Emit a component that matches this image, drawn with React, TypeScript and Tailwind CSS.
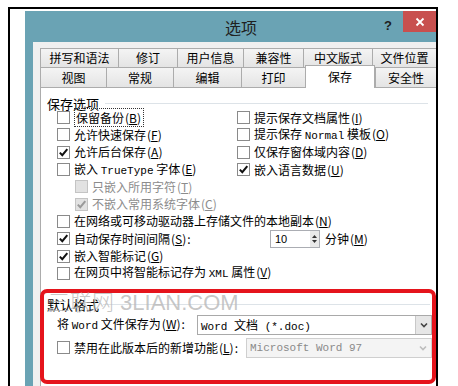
import type { ReactNode } from 'react';

const mono = "font-['Liberation_Mono',monospace] text-[11px]";

const Key = ({ k }: { k: string }) => (
  <span className="px-[1px]">
    (<span className="underline">{k}</span>)
  </span>
);

const Box = ({ checked = false, disabled = false }: { checked?: boolean; disabled?: boolean }) => (
  <span
    className={`flex h-[13px] w-[13px] shrink-0 items-center justify-center border ${
      disabled ? 'border-[#c4c4c4] bg-[#e2e2e2]' : 'border-[#8a8a8a] bg-white'
    }`}
  >
    {checked && (
      <svg width="11" height="11" viewBox="0 0 11 11">
        <path
          d="M1.8 5.6 L4.3 8.2 L9.3 2.2"
          fill="none"
          stroke={disabled ? '#9a9a9a' : '#111'}
          strokeWidth="2"
        />
      </svg>
    )}
  </span>
);

const Row = ({
  checked,
  disabled,
  children,
  indent = false,
}: {
  checked?: boolean;
  disabled?: boolean;
  children: ReactNode;
  indent?: boolean;
}) => (
  <div className={`flex h-[17.3px] items-center gap-[4px] ${indent ? 'ml-[18px]' : ''}`}>
    <Box checked={checked} disabled={disabled} />
    <span className={`whitespace-nowrap leading-none ${disabled ? 'text-[#8c8c8c]' : 'text-black'}`}>{children}</span>
  </div>
);

const Chevron = ({ color }: { color: string }) => (
  <svg width="8" height="6" viewBox="0 0 8 6">
    <path d="M1 1.5 L4 4.5 L7 1.5" fill="none" stroke={color} strokeWidth="1.6" />
  </svg>
);

const backTabs = [
  { label: '拼写和语法', w: 'w-[78px]' },
  { label: '修订', w: 'w-[59px]' },
  { label: '用户信息', w: 'w-[66px]' },
  { label: '兼容性', w: 'w-[60px]' },
  { label: '中文版式', w: 'w-[69px]' },
  { label: '文件位置', w: 'w-[64px]' },
];

const frontTabs = [
  { label: '视图', w: 'w-[66px]' },
  { label: '常规', w: 'w-[67px]' },
  { label: '编辑', w: 'w-[68px]' },
  { label: '打印', w: 'w-[64px]' },
  { label: '保存', w: 'w-[70px]', active: true },
  { label: '安全性', w: 'w-[61px]' },
];

const App = () => {
  return (
    <div className="h-[386px] w-[458px] overflow-hidden bg-white pl-[8px] pt-[7px] font-['Noto_Sans_CJK_SC',sans-serif] text-[12px] text-black">
      <div className="h-[379px] w-[430px] border-l-2 border-r-2 border-t-2 border-black pl-[15px] pt-[2px]">
        <div className="flex h-[375px] flex-col bg-[#6aa3b4]">
          {/* title bar */}
          <div className="flex h-[31px] shrink-0 items-start">
            <span className="ml-[200px] mt-[6px] text-[16px] leading-[20px] text-[#202020]">选项</span>
            <div className="flex-1" />
            <span className="mr-[11px] mt-[5px] font-['Liberation_Sans',sans-serif] text-[13px] font-bold text-[#1e1e1e]">?</span>
            <button className="flex h-[21px] w-[33px] items-center justify-center bg-[#c8504f]">
              <svg width="10" height="10" viewBox="0 0 10 10">
                <path d="M1.5 1.5 L8.5 8.5 M8.5 1.5 L1.5 8.5" stroke="#fff" strokeWidth="1.8" />
              </svg>
            </button>
          </div>

          <div className="flex flex-1">
            <div className="w-[8px] shrink-0" />
            <div className="flex flex-1 flex-col bg-[#f0f0f0] pl-[7px] pt-[6px]">
              {/* tabs */}
              <div className="flex h-[19px]">
                {backTabs.map((t) => (
                  <div
                    key={t.label}
                    className={`${t.w} flex shrink-0 items-center justify-center border-l border-t border-[#acacac] bg-linear-to-b from-[#f4f4f4] to-[#e4e4e4] leading-none`}
                  >
                    {t.label}
                  </div>
                ))}
              </div>
              <div className="flex h-[20px] items-end">
                {frontTabs.map((t) =>
                  t.active ? (
                    <div
                      key={t.label}
                      className={`${t.w} relative z-10 -mb-px flex h-[23px] shrink-0 items-center justify-center border-l border-r border-t border-[#acacac] bg-white leading-none`}
                    >
                      {t.label}
                    </div>
                  ) : (
                    <div
                      key={t.label}
                      className={`${t.w} flex h-[20px] shrink-0 items-center justify-center border-l border-t border-[#acacac] bg-linear-to-b from-[#f4f4f4] to-[#e4e4e4] leading-none`}
                    >
                      {t.label}
                    </div>
                  ),
                )}
              </div>

              {/* content */}
              <div className="flex-1 border-l border-t border-[#acacac] bg-white pt-[9px]">
                <div className="flex h-[12px] items-center pl-[6px] pr-[8px]">
                  <span className="text-[13px] leading-none">保存选项</span>
                  <span className="ml-[6px] h-px flex-1 bg-[#dde3e8]" />
                </div>

                <div className="pl-[16px]">
                  <div className="flex">
                    <div className="w-[180px]">
                      <Row>
                        <span className="border border-dotted border-[#333] px-[1px]">
                          保留备份<Key k="B" />
                        </span>
                      </Row>
                      <Row>
                        允许快速保存<Key k="F" />
                      </Row>
                      <Row checked>
                        允许后台保存<Key k="A" />
                      </Row>
                      <Row>
                        嵌入 <span className={mono}>TrueType</span> 字体<Key k="E" />
                      </Row>
                    </div>
                    <div>
                      <Row>
                        提示保存文档属性<Key k="I" />
                      </Row>
                      <Row>
                        提示保存 <span className={mono}>Normal</span> 模板<Key k="O" />
                      </Row>
                      <Row>
                        仅保存窗体域内容<Key k="D" />
                      </Row>
                      <Row checked>
                        嵌入语言数据<Key k="U" />
                      </Row>
                    </div>
                  </div>
                  <Row indent disabled>
                    只嵌入所用字符<Key k="T" />
                  </Row>
                  <Row indent disabled checked>
                    不嵌入常用系统字体<Key k="C" />
                  </Row>
                  <Row>
                    在网络或可移动驱动器上存储文件的本地副本<Key k="N" />
                  </Row>
                  <div className="flex h-[17.3px] items-center gap-[4px]">
                    <Box checked />
                    <span className="w-[192px] whitespace-nowrap leading-none">
                      自动保存时间间隔<Key k="S" />:
                    </span>
                    <div className="flex h-[18px] w-[50px] border border-[#abadb3] bg-white">
                      <span className="flex-1 pl-[4px] text-[11px] leading-[16px] font-['Liberation_Sans',sans-serif]">10</span>
                      <div className="flex w-[9px] flex-col items-center justify-center gap-[2px] bg-[#e9e9e9]">
                        <svg width="5" height="3" viewBox="0 0 5 3">
                          <path d="M0 3 L2.5 0 L5 3 Z" fill="#333" />
                        </svg>
                        <svg width="5" height="3" viewBox="0 0 5 3">
                          <path d="M0 0 L2.5 3 L5 0 Z" fill="#333" />
                        </svg>
                      </div>
                    </div>
                    <span className="ml-[1px] whitespace-nowrap leading-none">
                      分钟<Key k="M" />
                    </span>
                  </div>
                  <Row checked>
                    嵌入智能标记<Key k="G" />
                  </Row>
                  <Row>
                    在网页中将智能标记存为 <span className={mono}>XML</span> 属性<Key k="V" />
                  </Row>
                </div>

                {/* default format group */}
                <div className="relative -ml-px mt-[7px] h-[95px] w-[396px] rounded-[7px] border-4 border-[#e5141c] pt-[6px]">
                  <div className="flex h-[12px] items-center pl-[3px] pr-[2px]">
                    <span className="text-[13px] leading-none">默认格式</span>
                    <span className="ml-[4px] h-px flex-1 bg-[#dde3e8]" />
                  </div>
                  <span className="pointer-events-none absolute left-[4px] top-[0px] whitespace-nowrap font-['Liberation_Sans','Noto_Sans_CJK_SC',sans-serif] text-[22px] font-light leading-[20px] text-[#b8b8b8]/80">
                    三联网 3LIAN.COM
                  </span>

                  <div className="mt-[4px] flex h-[20px] items-center pl-[13px]">
                    <span className="w-[140px] whitespace-nowrap leading-none">
                      将 <span className={mono}>Word</span> 文件保存为<Key k="W" />:
                    </span>
                    <div className="flex h-[20px] w-[235px] border border-[#a9a9a9] bg-white">
                      <span className={`flex-1 pl-[3px] leading-[18px] ${mono}`}>
                        Word <span className="font-['Noto_Sans_CJK_SC',sans-serif] text-[12px]">文档</span> (*.doc)
                      </span>
                      <span className="flex w-[16px] items-center justify-center border-l border-[#c8c8c8] bg-[#e6e6e6]">
                        <Chevron color="#444" />
                      </span>
                    </div>
                  </div>

                  <div className="mt-[3px] flex h-[20px] items-center gap-[4px] pl-[13px]">
                    <Box />
                    <span className="w-[168px] whitespace-nowrap leading-none">
                      禁用在此版本后的新增功能<Key k="L" />:
                    </span>
                    <div className="flex h-[20px] w-[186px] border border-[#cfcfcf] bg-[#f4f4f4]">
                      <span className={`flex-1 pl-[3px] leading-[18px] text-[#8a8a8a] ${mono}`}>Microsoft Word 97</span>
                      <span className="flex w-[16px] items-center justify-center">
                        <Chevron color="#bdbdbd" />
                      </span>
                    </div>
                  </div>
                </div>
              </div>
            </div>
          </div>
        </div>
      </div>
    </div>
  );
};

export default App;
